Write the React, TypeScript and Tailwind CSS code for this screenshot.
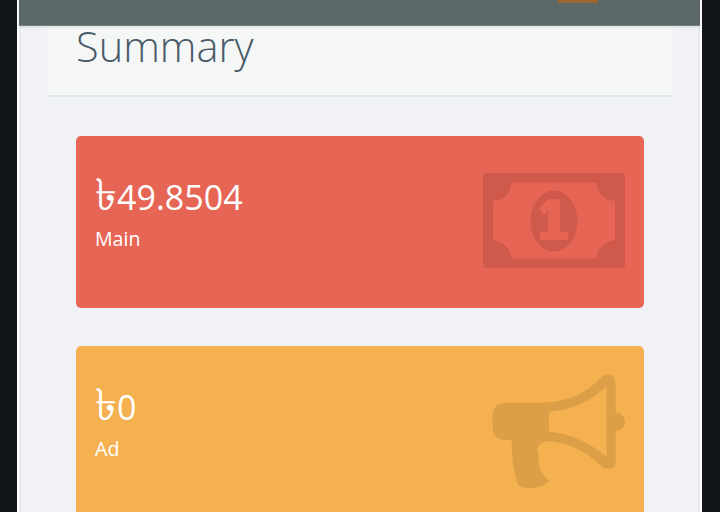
const moneyPath =
  "M3 0H139a3 3 0 0 1 3 3V92a3 3 0 0 1-3 3H3a3 3 0 0 1-3-3V3a3 3 0 0 1 3-3Z " +
  "M28.5 9.5H113.5A18.5 18.5 0 0 0 132 28V67.5A18.5 18.5 0 0 0 113.5 85.5H28.5A18.5 18.5 0 0 0 10 67.5V28A18.5 18.5 0 0 0 28.5 9.5Z " +
  "M71 17.5C84 17.5 94.5 31 94.5 48C94.5 65 84 78.5 71 78.5C58 78.5 47.5 65 47.5 48C47.5 31 58 17.5 71 17.5Z " +
  "M65.3 26.3H77V58.7H85.3V67H57V58.7H65.3V37L61 42L56.3 35.3Z";

const megaphonePath =
  "M75 113H190C265 110 320 85 365 35C378 22 407 28 407 55V143C425 143 435 155 435 170C435 185 425 197 407 197V290C407 312 380 320 360 300C320 260 270 235 205 228C180 230 168 245 175 265C180 275 170 285 180 310C188 328 198 340 207 347C190 365 160 372 135 368C122 366 113 362 113 355C100 320 95 270 95 225H75C52 225 38 210 38 190V150C38 128 52 113 75 113Z " +
  "M207 140V200C275 205 330 235 380 275V65C330 110 275 135 207 140Z";

function MoneyIcon() {
  return (
    <svg width="142" height="95" viewBox="0 0 142 95" className="fill-black/10 mt-[-3px]">
      <path d={moneyPath} fillRule="evenodd" />
    </svg>
  );
}

function MegaphoneIcon() {
  return (
    <svg width="160" height="130" viewBox="0 0 480 390" className="fill-black/10 mt-[-4px]">
      <path d={megaphonePath} fillRule="evenodd" />
    </svg>
  );
}

function StatCard({ amount, label, color, icon, iconPad }: { amount: string; label: string; color: string; icon: React.ReactNode; iconPad: string }) {
  return (
    <div className={`h-[172px] rounded-[5px] flex items-center justify-between pl-[19px] ${iconPad} ${color}`}>
      <div className="text-white font-['Open_Sans',sans-serif] mt-[-21px]">
        <div className="text-[34px] leading-[44px]">
          <span className="text-[44px] leading-[44px]">৳</span>
          {amount}
        </div>
        <div className="text-[19.6px] leading-[26px] mt-[7px]">{label}</div>
      </div>
      {icon}
    </div>
  );
}

export default function App() {
  return (
    <div className="h-[512px] overflow-hidden bg-[#12151a] pl-[17px] pr-[18px] font-['Open_Sans',sans-serif]">
      <div className="h-full border-x-2 border-white">
        <div className="h-[26px] bg-[#5d6868] border-b border-[#778080] shadow-[0_1px_3px_rgba(0,0,0,0.12)] relative">
          <div className="absolute left-[539px] top-0 h-[3px] w-[40px] bg-[#99662f]" />
        </div>
        <div className="h-full bg-[#f0f2f7] border-x-2 border-[#e8eaf0] pl-[26px] pr-[25px]">
          <div className="h-[71px] bg-[#f5f7f7] border-b-2 border-[#dfe6e8] pl-[29px]">
            <h1 className="text-[41.5px] font-light leading-[40px] text-[#4a5b67]">Summary</h1>
          </div>
          <div className="px-[29px] pt-[39px] flex flex-col gap-[38px]">
            <StatCard amount="49.8504" label="Main" color="bg-[#e76555]" icon={<MoneyIcon />} iconPad="pr-[19px]" />
            <StatCard amount="0" label="Ad" color="bg-[#f5b04f]" icon={<MegaphoneIcon />} iconPad="pr-[4px]" />
          </div>
        </div>
      </div>
    </div>
  );
}
